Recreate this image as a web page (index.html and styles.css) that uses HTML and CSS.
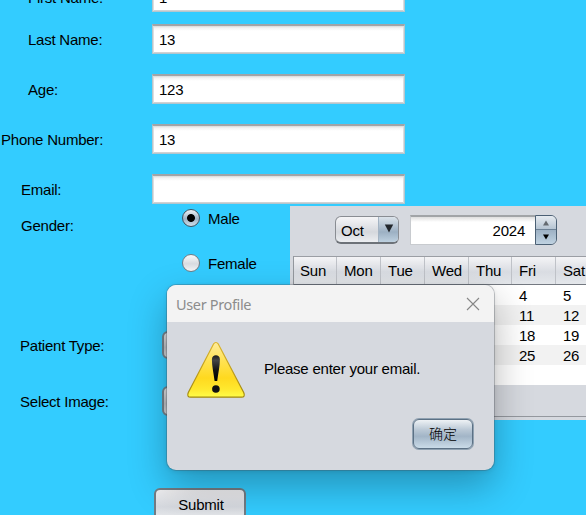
FILE: index.html
```html
<!DOCTYPE html>
<html lang="en">
<head>
<meta charset="utf-8">
<title>User Profile</title>
<link rel="stylesheet" href="styles.css">
</head>
<body>
<main class="page">
  <form class="fields">
    <div class="row"><span class="label name">First Name:</span><span class="input">1</span></div>
    <div class="row"><span class="label name">Last Name:</span><span class="input">13</span></div>
    <div class="row"><span class="label name">Age:</span><span class="input">123</span></div>
    <div class="row"><span class="label phone">Phone Number:</span><span class="input">13</span></div>
    <div class="row"><span class="label email">Email:</span><span class="input"></span></div>
  </form>
  <div class="lower">
    <section class="details">
      <div class="gender">
        <span class="gender-label">Gender:</span>
        <div class="options">
          <span class="option"><i class="radio checked"></i>Male</span>
          <span class="option"><i class="radio"></i>Female</span>
        </div>
      </div>
      <div class="pick patient"><span>Patient Type:</span><b class="control"></b></div>
      <div class="pick image"><span>Select Image:</span><b class="control"></b></div>
      <div class="submit">Submit</div>
    </section>
    <section class="calendar">
      <div class="cal-top">
        <div class="month"><span>Oct</span><i><svg width="10" height="9" viewBox="0 0 10 9"><path d="M.8 .5H9.2L5 8.5Z" fill="#22272c"/></svg></i></div>
        <div class="year"><span class="year-value">2024</span>
          <div class="steps">
            <i><svg width="6" height="6" viewBox="0 0 6 6"><path d="M0 5.5H6L3 .5Z" fill="#646a70"/></svg></i>
            <i><svg width="6" height="6" viewBox="0 0 6 6"><path d="M0 .5H6L3 5.5Z" fill="#000"/></svg></i>
          </div>
        </div>
      </div>
      <div class="table">
        <div class="days head"><span>Sun</span><span>Mon</span><span>Tue</span><span>Wed</span><span>Thu</span><span>Fri</span><span>Sat</span></div>
        <div class="days"><span class="fri">4</span><span>5</span></div>
        <div class="days alt"><span class="fri">11</span><span>12</span></div>
        <div class="days"><span class="fri">18</span><span>19</span></div>
        <div class="days alt"><span class="fri">25</span><span>26</span></div>
        <div class="days"></div>
      </div>
    </section>
  </div>
  <div class="dialog">
    <div class="titlebar"><span>User Profile</span>
      <svg width="14" height="14" viewBox="0 0 14 14"><path d="M1 1L13 13M13 1L1 13" stroke="#868686" stroke-width="1.1" fill="none"/></svg>
    </div>
    <div class="body">
      <svg class="warn" width="60" height="58" viewBox="0 0 60 58">
        <defs>
          <linearGradient id="y" x1="0" y1="0" x2="0" y2="1"><stop offset="0" stop-color="#ffec9c"/><stop offset=".35" stop-color="#ffe250"/><stop offset=".65" stop-color="#ffd91f"/><stop offset=".85" stop-color="#ffe82e"/><stop offset="1" stop-color="#fffd4a"/></linearGradient>
          <linearGradient id="e" x1="0" y1="0" x2="0" y2="1"><stop offset="0" stop-color="#1c1c1c"/><stop offset=".2" stop-color="#444"/><stop offset=".6" stop-color="#111"/><stop offset="1" stop-color="#000"/></linearGradient>
          <linearGradient id="s" x1="0" y1="0" x2="0" y2="1"><stop offset="0" stop-color="#dcb52c"/><stop offset="1" stop-color="#a08710"/></linearGradient>
        </defs>
        <path d="M27.4 3.2Q29.9 -.2 32.4 3.2L57.7 51.5Q59.7 56 55.4 56.2H4.7Q.4 56 2.3 51.5Z" fill="url(#y)" stroke="url(#s)" stroke-width="1.2"/>
        <path d="M25.9 18.5C25.9 12.9 33.9 12.9 33.9 18.5C33.9 25 32.2 32 31.2 40H28.6C27.6 32 25.9 25 25.9 18.5Z" fill="url(#e)"/>
        <circle cx="29.9" cy="48" r="3.8" fill="#111"/>
      </svg>
      <span class="message">Please enter your email.</span>
    </div>
    <div class="actions"><div class="ok">确定</div></div>
  </div>
</main>
</body>
</html>
```

FILE: styles.css
```css
* { box-sizing: border-box; }
body { margin: 0; overflow: hidden; }
i, b { font-style: normal; font-weight: normal; }
svg { display: block; flex: none; }
.page {
  position: relative;
  width: 586px;
  height: 515px;
  overflow: hidden;
  background: #33ccff;
  color: #000;
  font: 15px/18px "Liberation Sans", Arial, sans-serif;
  letter-spacing: -0.23px;
}
.fields { margin-top: -18px; display: flex; flex-direction: column; height: 224px; }
.row { display: flex; height: 30px; margin-bottom: 20px; align-items: center; flex: none; }
.row:first-child { margin-bottom: 12px; }
.label { width: 152px; padding-top: 2px; }
.name { padding-left: 28px; }
.phone { padding-left: 1px; }
.email { padding-left: 21px; }
.input {
  width: 253px;
  height: 30px;
  padding: 5px 6px 0;
  border: 1px solid #b4c6ce;
  border-top: 2px solid #a1a4a7;
  background: linear-gradient(#d9d9d9, #f4f4f4 2px, #fff 5px);
  box-shadow: inset 1px 0 #dcdedf, inset -1px 0 #dcdedf, inset 0 -1px #d0d2d4;
}
.lower { display: flex; height: 309px; }
.details { width: 290px; flex: none; }
.gender { display: flex; height: 125px; }
.gender-label { width: 182px; padding: 11px 0 0 21px; }
.options { display: flex; flex-direction: column; gap: 27px; padding-top: 3px; }
.option { display: flex; height: 18px; align-items: center; gap: 8px; padding-top: 2px; }
.radio {
  width: 18px;
  height: 18px;
  margin-top: -3px;
  border: 1px solid #767b82;
  border-radius: 50%;
  background: linear-gradient(#fafafb, #d9dce1 55%, #f5f6f8);
}
.radio.checked {
  border-color: #43525f;
  background: radial-gradient(circle, #000 3.5px, transparent 4.4px), linear-gradient(#eff3f6, #9eb3c6 55%, #ccdeeb);
}
.pick { display: flex; padding-left: 20px; height: 28px; align-items: center; }
.pick span { width: 142px; padding-top: 2px; }
.control { width: 100px; height: 28px; border: 2px solid #74828b; border-radius: 6px; background: linear-gradient(#e4e5e7, #c0c3c8 60%, #d6d8db); }
.image { margin-top: 28px; }
.image .control { height: 30px; }
.submit {
  margin: 73px 0 0 154px;
  width: 92px;
  height: 32px;
  padding: 6px 0 0 2px;
  text-align: center;
  border: 2px solid #747c84;
  border-radius: 6px;
  background: linear-gradient(#f1f1f3, #d7dae0 60%, #e8eaed);
}
.calendar { width: 296px; height: 214px; flex: none; overflow: hidden; background: #d6d9df; }
.cal-top { display: flex; height: 50px; padding: 10px 0 0 45px; gap: 11px; }
.month {
  display: flex;
  width: 64px;
  height: 28px;
  border: 1px solid #898d93;
  border-bottom: 2px solid #6d7278;
  border-radius: 6px;
  overflow: hidden;
  background: linear-gradient(#f5f5f7, #d5d8dd 60%, #eceef1);
}
.month span { width: 42px; padding: 5px 0 0 5px; }
.month i {
  flex: 1;
  display: flex;
  align-items: center;
  justify-content: center;
  padding-bottom: 2px;
  border-left: 1px solid #a3b3c3;
  background: linear-gradient(#dbe3ea, #9cb0c3 60%, #bdd0df);
}
.year { display: flex; height: 30px; margin-top: -1px; }
.year-value {
  width: 125px;
  height: 30px;
  padding: 5px 10px 0;
  text-align: right;
  border: 1px solid #c8cbcf;
  border-top: 2px solid #a1a4a7;
  border-right: 0;
  background: linear-gradient(#dedede, #fff 5px);
}
.steps { width: 22px; height: 30px; border: 1px solid #4b6074; border-radius: 0 6px 6px 0; overflow: hidden; }
.steps i { display: flex; height: 14px; align-items: center; justify-content: center; padding-right: 1px; }
.steps i:first-child { border-bottom: 1px solid #6d8195; background: linear-gradient(#e6ebf0, #b5c4d2); }
.steps i:last-child { background: linear-gradient(#9db1c4, #bfd2e1); }
.table { width: 293px; height: 161px; margin-left: 3px; border-left: 1px solid #94989e; border-bottom: 1px solid #94989e; }
.days { display: grid; grid-template-columns: 43px 44px 44px 44px 43px 44px 44px; height: 20px; background: #fff; }
.days span { padding: 2px 0 0 7px; }
.days .fri { grid-column: 6; }
.days.alt { background: #f2f2f2; }
.days.head {
  height: 29px;
  border-top: 1px solid #9b9ea4;
  border-bottom: 1px solid #747981;
  background: linear-gradient(#f4f4f6, #d9dce2 55%, #e4e7eb);
}
.head span { padding: 5px 0 0 7px; border-right: 1px solid #bfc2c8; }
.head span:first-child { padding-left: 6px; }
.dialog {
  position: absolute;
  left: 167px;
  top: 285px;
  width: 327px;
  height: 185px;
  border-radius: 9px;
  background: #d6d9df;
  box-shadow: 0 0 0 1px rgba(70, 80, 90, .3), 0 16px 38px rgba(0, 0, 0, .29), 0 1px 5px rgba(0, 0, 0, .1);
}
.titlebar {
  display: flex;
  align-items: center;
  justify-content: space-between;
  height: 37px;
  padding: 0 14px 0 9px;
  border-radius: 9px 9px 0 0;
  background: #f3f3f3;
  color: #8c8c8c;
  font: 14.5px/20px "Noto Sans", sans-serif;
  letter-spacing: -0.35px;
}
.body { display: flex; height: 94px; padding: 19px 0 0 19px; }
.message { padding: 19px 0 0 18px; }
.actions { display: flex; justify-content: flex-end; padding: 3px 21px 0 0; }
.ok {
  width: 60px;
  height: 30px;
  padding-top: 4px;
  text-align: center;
  border: 1px solid #5c7185;
  border-radius: 6px;
  box-shadow: 0 0 0 1px rgba(105, 130, 152, .65);
  background: linear-gradient(#eef2f5, #bac8d5 35%, #a2b5c7 58%, #cadbe8);
  font: 14px/18px "Noto Sans CJK SC", sans-serif;
  font-weight: 300;
  letter-spacing: 0;
}
```
